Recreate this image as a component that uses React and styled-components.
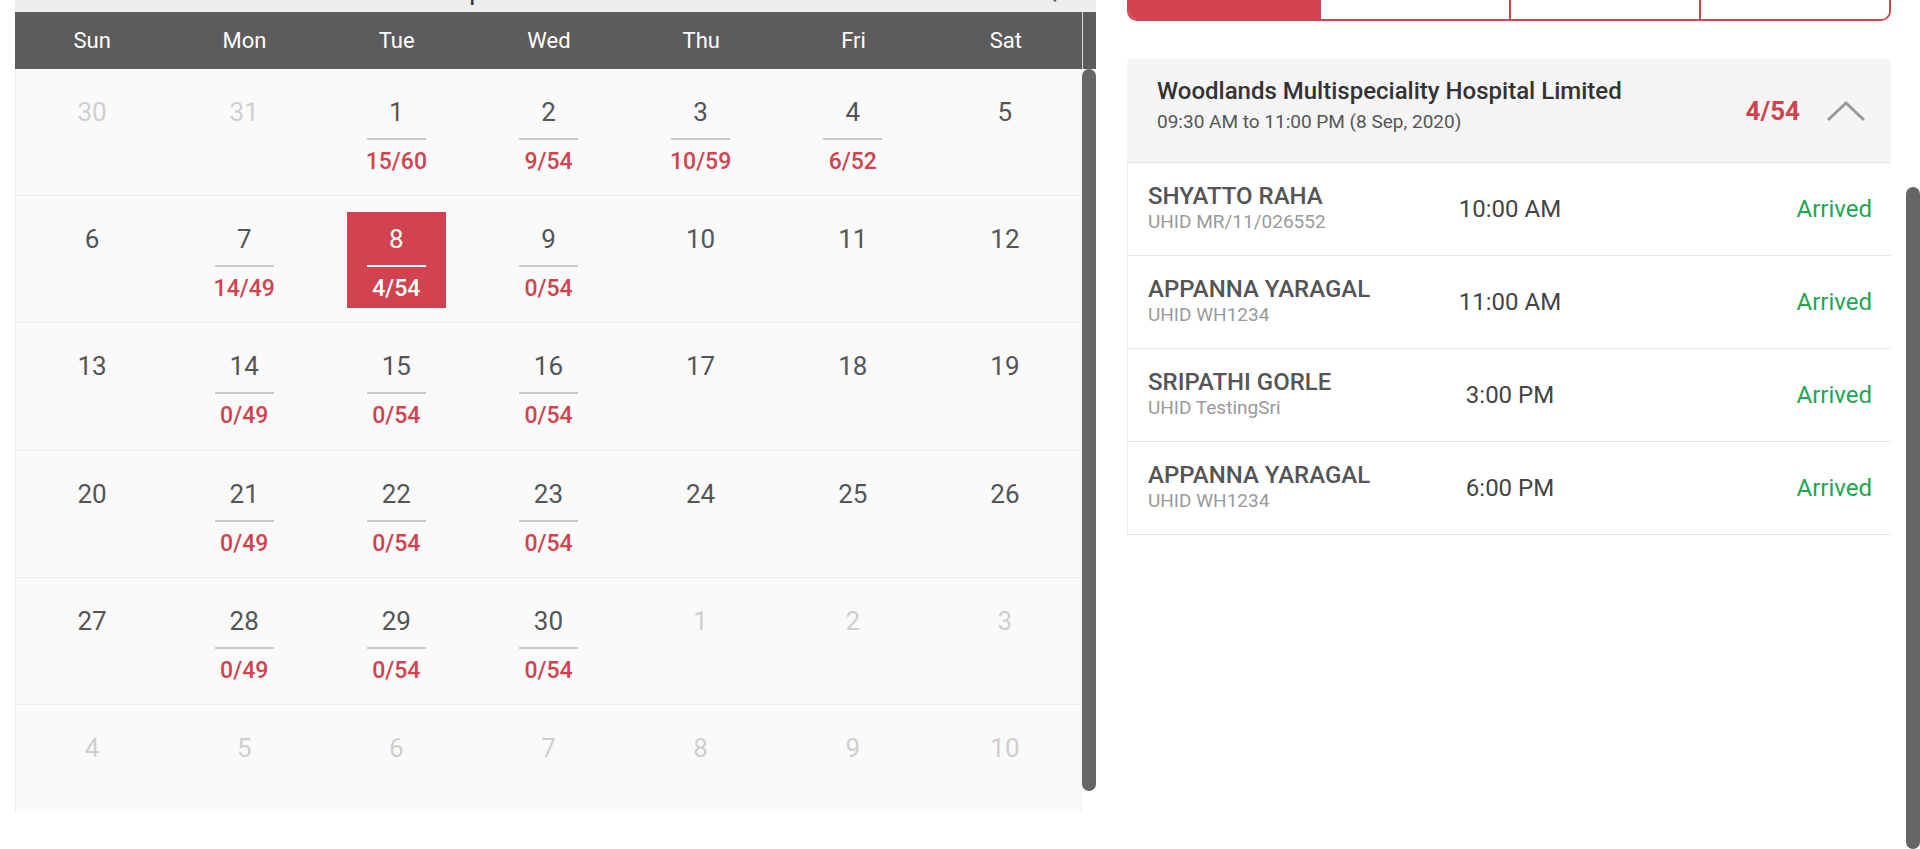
import React, { useLayoutEffect, useRef } from 'react';
import styled, { createGlobalStyle } from 'styled-components';

const RED = '#d0434f';

const GlobalStyle = createGlobalStyle`
  html, body {
    margin: 0;
    padding: 0;
    height: 100%;
    overflow: hidden;
  }
  body {
    font-family: Roboto, "Liberation Sans", Arial, sans-serif;
    background: #fff;
    color: #444;
  }
  * { box-sizing: border-box; }
`;

/* window frame: scrolled content + its scroll rail */
const Shell = styled.div`
  height: 100vh;
  display: flex;
`;

const ScrollArea = styled.div`
  flex: 1;
  min-width: 0;
  overflow-y: auto;
  scrollbar-width: none;
  &::-webkit-scrollbar { display: none; }
`;

const Rail = styled.div`
  flex: none;
  width: 14px;
  padding-top: ${(p) => p.$offset}px;
  background: #fff;
`;

const Thumb = styled.div`
  height: ${(p) => p.$size}px;
  border-radius: 7px;
  background: #666;
`;

const Page = styled.div`
  padding: 0 15px 37px;
`;

const PageTop = styled.div`
  height: 197px;
  padding-top: 40px;
`;

const PageTitle = styled.h1`
  margin: 0;
  font-size: 28px;
  font-weight: 500;
  color: #333;
`;

const Columns = styled.div`
  display: grid;
  grid-template-columns: 1081px 764px;
  column-gap: 31px;
  align-items: start;
`;

/* calendar */
const Calendar = styled.section`
  display: flex;
  flex-direction: column;
`;

const MonthBar = styled.div`
  height: 55px;
  padding: 14px 30px 0;
  background: #eeeeee;
  display: flex;
  align-items: center;
  justify-content: space-between;
`;

const MonthTitle = styled.div`
  font-size: 26px;
  line-height: 41px;
  color: #333;
  margin-right: 40px;
`;

const NavArrow = styled.svg`
  align-self: ${(p) => (p.$raised ? 'flex-start' : 'center')};
`;

const WeekHeader = styled.div`
  height: 57px;
  padding-left: 1px;
  background: #5c5c5c;
  display: grid;
  grid-template-columns: repeat(7, 1fr) 14px;
  align-items: center;
`;

const WeekDay = styled.div`
  text-align: center;
  color: #fff;
  font-size: 22px;
`;

const HeaderGutter = styled.div`
  height: 100%;
  border-left: 1px solid #d8d8d8;
`;

const CalFrame = styled.div`
  height: 743px;
  display: flex;
`;

const CalBody = styled.div`
  flex: 1;
  overflow: hidden;
  background: #fafafa;
  border-left: 1px solid #ececec;
  border-right: 1px solid #f0f0f0;
`;

const WeekRow = styled.div`
  height: 127.2px;
  display: grid;
  grid-template-columns: repeat(7, 1fr);
  border-bottom: 1px solid #ececec;
`;

const DayCell = styled.div`
  display: flex;
  justify-content: center;
  align-items: flex-start;
  padding-top: 16px;
`;

const DayBlock = styled.div`
  width: 99px;
  height: 96px;
  padding-top: 12px;
  text-align: center;
  background: ${(p) => (p.$selected ? RED : 'transparent')};
`;

const DayNum = styled.div`
  font-size: 26px;
  line-height: 30px;
  color: ${(p) => (p.$selected ? '#fff' : p.$muted ? '#cfcfcf' : '#555')};
`;

const DayRule = styled.div`
  width: 59px;
  height: 2px;
  margin: 11px auto 0;
  background: ${(p) => (p.$selected ? '#fff' : '#c9c9c9')};
`;

const DayCount = styled.div`
  margin-top: 8px;
  font-size: 23px;
  line-height: 28px;
  font-weight: 500;
  color: ${(p) => (p.$selected ? '#fff' : RED)};
`;

/* right side */
const Side = styled.section`
  display: flex;
  flex-direction: column;
`;

const Tabs = styled.div`
  height: 64px;
  margin-bottom: 38px;
  display: grid;
  grid-template-columns: repeat(4, 1fr);
  border: 2px solid ${RED};
  border-top: none;
  border-radius: 0 0 10px 10px;
  overflow: hidden;
`;

const Tab = styled.div`
  padding-top: 10px;
  text-align: center;
  font-size: 16px;
  font-weight: 500;
  color: ${(p) => (p.$active ? '#fff' : RED)};
  background: ${(p) => (p.$active ? RED : '#fff')};
  & + & { border-left: 2px solid ${RED}; }
`;

const ClinicHead = styled.div`
  height: 104px;
  padding: 0 25px 0 30px;
  background: #f5f5f5;
  border-radius: 5px 5px 0 0;
  border-bottom: 1px solid #e3e3e3;
  display: flex;
  align-items: center;
  justify-content: space-between;
`;

const ClinicText = styled.div`
  padding-bottom: 11px;
`;

const ClinicName = styled.div`
  font-size: 24px;
  line-height: 28px;
  font-weight: 500;
  color: #333;
`;

const ClinicHours = styled.div`
  margin-top: 6px;
  font-size: 19px;
  line-height: 22px;
  color: #555;
`;

const ClinicMeta = styled.div`
  display: flex;
  align-items: center;
  gap: 26px;
`;

const ClinicCount = styled.div`
  font-size: 26px;
  font-weight: 700;
  color: ${RED};
`;

const PatientRow = styled.div`
  height: 93px;
  padding: 0 19px 0 20px;
  display: grid;
  grid-template-columns: 1fr 1fr 1fr;
  align-items: center;
  background: #fff;
  border-left: 1px solid #ececec;
  border-bottom: 1px solid #e6e6e6;
`;

const PatientInfo = styled.div`
  padding-bottom: 2px;
`;

const PatientName = styled.div`
  font-size: 24px;
  line-height: 26px;
  font-weight: 500;
  color: #555;
`;

const PatientId = styled.div`
  margin-top: 2px;
  font-size: 19px;
  line-height: 22px;
  color: #9a9a9a;
`;

const SlotTime = styled.div`
  text-align: center;
  font-size: 24px;
  color: #444;
`;

const Status = styled.div`
  text-align: right;
  font-size: 24px;
  color: #1ea651;
`;

const days = ['Sun', 'Mon', 'Tue', 'Wed', 'Thu', 'Fri', 'Sat'];

const weeks = [
  [{ d: 30, muted: true }, { d: 31, muted: true }, { d: 1, c: '15/60' }, { d: 2, c: '9/54' }, { d: 3, c: '10/59' }, { d: 4, c: '6/52' }, { d: 5 }],
  [{ d: 6 }, { d: 7, c: '14/49' }, { d: 8, c: '4/54', sel: true }, { d: 9, c: '0/54' }, { d: 10 }, { d: 11 }, { d: 12 }],
  [{ d: 13 }, { d: 14, c: '0/49' }, { d: 15, c: '0/54' }, { d: 16, c: '0/54' }, { d: 17 }, { d: 18 }, { d: 19 }],
  [{ d: 20 }, { d: 21, c: '0/49' }, { d: 22, c: '0/54' }, { d: 23, c: '0/54' }, { d: 24 }, { d: 25 }, { d: 26 }],
  [{ d: 27 }, { d: 28, c: '0/49' }, { d: 29, c: '0/54' }, { d: 30, c: '0/54' }, { d: 1, muted: true }, { d: 2, muted: true }, { d: 3, muted: true }],
  [4, 5, 6, 7, 8, 9, 10].map((d) => ({ d, muted: true })),
];

const patients = [
  { name: 'SHYATTO RAHA', uhid: 'MR/11/026552', time: '10:00 AM' },
  { name: 'APPANNA YARAGAL', uhid: 'WH1234', time: '11:00 AM' },
  { name: 'SRIPATHI GORLE', uhid: 'TestingSri', time: '3:00 PM' },
  { name: 'APPANNA YARAGAL', uhid: 'WH1234', time: '6:00 PM' },
];

const CollapseIcon = () => (
  <svg width="40" height="22" viewBox="0 0 40 22">
    <polyline points="2,20 20,3 38,20" fill="none" stroke="#999" strokeWidth="3" />
  </svg>
);

const App = () => {
  const scroller = useRef();

  // the page is shown scrolled to its end
  useLayoutEffect(() => {
    const el = scroller.current;
    el.scrollTop = el.scrollHeight - el.clientHeight;
  }, []);

  return (
    <Shell>
      <GlobalStyle />
      <ScrollArea ref={scroller}>
        <Page>
          <PageTop>
            <PageTitle>Appointments</PageTitle>
          </PageTop>

          <Columns>
            <Calendar>
              <MonthBar>
                <NavArrow $raised width="14" height="18" viewBox="0 0 14 22">
                  <polyline points="12,2 3,11 12,20" fill="none" stroke="#555" strokeWidth="2.5" />
                </NavArrow>
                <MonthTitle>September 2020</MonthTitle>
                <NavArrow width="14" height="22" viewBox="0 0 14 22">
                  <polyline points="2,2 11,11 2,20" fill="none" stroke="#555" strokeWidth="2.5" />
                </NavArrow>
              </MonthBar>

              <WeekHeader>
                {days.map((d) => (
                  <WeekDay key={d}>{d}</WeekDay>
                ))}
                <HeaderGutter />
              </WeekHeader>

              <CalFrame>
                <CalBody>
                  {weeks.map((week, wi) => (
                    <WeekRow key={wi}>
                      {week.map((day, di) => (
                        <DayCell key={di}>
                          <DayBlock $selected={day.sel}>
                            <DayNum $muted={day.muted} $selected={day.sel}>
                              {day.d}
                            </DayNum>
                            {day.c && (
                              <>
                                <DayRule $selected={day.sel} />
                                <DayCount $selected={day.sel}>{day.c}</DayCount>
                              </>
                            )}
                          </DayBlock>
                        </DayCell>
                      ))}
                    </WeekRow>
                  ))}
                </CalBody>
                <Rail $offset={0}>
                  <Thumb $size={722} />
                </Rail>
              </CalFrame>
            </Calendar>

            <Side>
              <Tabs>
                <Tab $active>Day</Tab>
                <Tab>Week</Tab>
                <Tab>Month</Tab>
                <Tab>All</Tab>
              </Tabs>

              <ClinicHead>
                <ClinicText>
                  <ClinicName>Woodlands Multispeciality Hospital Limited</ClinicName>
                  <ClinicHours>09:30 AM to 11:00 PM (8 Sep, 2020)</ClinicHours>
                </ClinicText>
                <ClinicMeta>
                  <ClinicCount>4/54</ClinicCount>
                  <CollapseIcon />
                </ClinicMeta>
              </ClinicHead>

              {patients.map((p, i) => (
                <PatientRow key={i}>
                  <PatientInfo>
                    <PatientName>{p.name}</PatientName>
                    <PatientId>UHID {p.uhid}</PatientId>
                  </PatientInfo>
                  <SlotTime>{p.time}</SlotTime>
                  <Status>Arrived</Status>
                </PatientRow>
              ))}
            </Side>
          </Columns>
        </Page>
      </ScrollArea>
      <Rail $offset={187}>
        <Thumb $size={662} />
      </Rail>
    </Shell>
  );
};

export default App;
